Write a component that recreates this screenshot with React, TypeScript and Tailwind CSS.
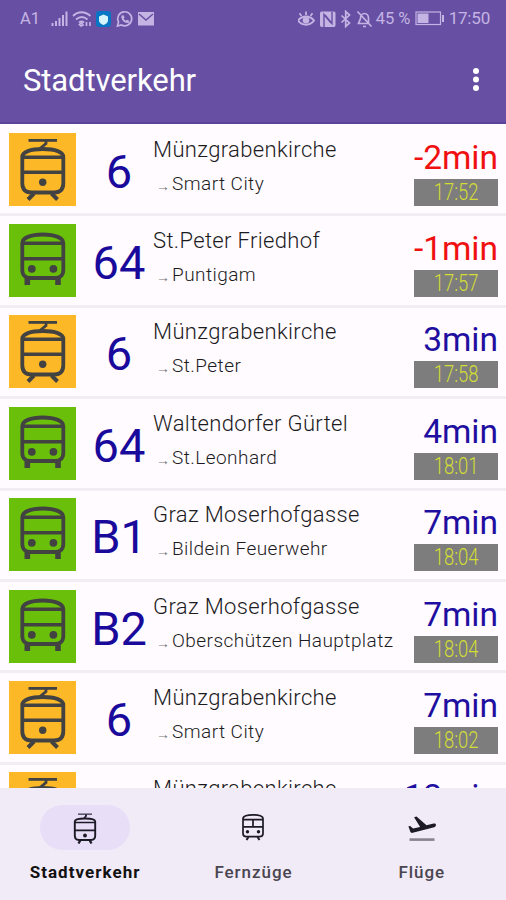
import React from 'react';

type Kind = 'tram' | 'bus';

interface Departure {
  kind: Kind;
  line: string;
  stop: string;
  destination: string;
  wait: string;
  time: string;
  late?: boolean;
}

const departures: Departure[] = [
  { kind: 'tram', line: '6', stop: 'Münzgrabenkirche', destination: 'Smart City', wait: '-2min', time: '17:52', late: true },
  { kind: 'bus', line: '64', stop: 'St.Peter Friedhof', destination: 'Puntigam', wait: '-1min', time: '17:57', late: true },
  { kind: 'tram', line: '6', stop: 'Münzgrabenkirche', destination: 'St.Peter', wait: '3min', time: '17:58' },
  { kind: 'bus', line: '64', stop: 'Waltendorfer Gürtel', destination: 'St.Leonhard', wait: '4min', time: '18:01' },
  { kind: 'bus', line: 'B1', stop: 'Graz Moserhofgasse', destination: 'Bildein Feuerwehr', wait: '7min', time: '18:04' },
  { kind: 'bus', line: 'B2', stop: 'Graz Moserhofgasse', destination: 'Oberschützen Hauptplatz', wait: '7min', time: '18:04' },
  { kind: 'tram', line: '6', stop: 'Münzgrabenkirche', destination: 'Smart City', wait: '7min', time: '18:02' },
  { kind: 'tram', line: '', stop: 'Münzgrabenkirche', destination: '', wait: '12min', time: '' },
];

const TramIcon: React.FC<{ className?: string }> = ({ className }) => (
  <svg viewBox="0 0 67 73" className={className} fill="none" stroke="currentColor" strokeWidth="3.8">
    <path d="M19.5 7.4H48" strokeWidth="2.8" />
    <path d="M37 8v2.5L31 15.5" strokeWidth="2.8" />
    <path d="M13.3 24c0-5 8-8 20.5-8s20.5 3 20.5 8v26c0 6.5-3.5 9.5-9 9.5H22.3c-5.5 0-9-3-9-9.5z" />
    <path d="M13.3 24.3h41M13.3 39.3h41" strokeWidth="3.4" />
    <circle cx="33.7" cy="49.2" r="3.7" fill="currentColor" stroke="none" />
    <path d="M25 60.5l-6 6M42.5 60.5l6 6" strokeWidth="4" />
  </svg>
);

const BusIcon: React.FC<{ className?: string }> = ({ className }) => (
  <svg viewBox="0 0 67 73" className={className} fill="none" stroke="currentColor" strokeWidth="3.8">
    <path d="M13.3 19c0-5 8-8.5 20.5-8.5s20.5 3.5 20.5 8.5v27c0 5.5-3.5 8-8 8H21.3c-4.5 0-8-2.5-8-8z" />
    <path d="M13.3 19.2h41M13.3 34.8h41" strokeWidth="3.4" />
    <circle cx="22.8" cy="44.8" r="3.9" fill="currentColor" stroke="none" />
    <circle cx="44.4" cy="44.8" r="3.9" fill="currentColor" stroke="none" />
    <path d="M18.3 53v8M49 53v8" strokeWidth="5.6" />
  </svg>
);

const NavTramIcon = () => (
  <svg viewBox="0 0 26 34" className="h-[34px] w-[26px]" fill="none" stroke="currentColor" strokeWidth="1.9">
    <path d="M6 3.2h14" stroke="#5d5868" strokeWidth="1.6" />
    <path d="M14 3.5v1.5l-2 2.5" strokeWidth="1.8" />
    <path d="M2.8 10.5c0-2 4-3 10.2-3s10.2 1 10.2 3v14c0 3-1.500 4.500-4.200 4.500H7c-2.700 0-4.200-1.500-4.200-4.500z" />
    <path d="M2.8 11.5h20.4M2.8 19.300h20.4" strokeWidth="1.7" />
    <circle cx="13" cy="24.500" r="1.9" fill="currentColor" stroke="none" />
    <path d="M8.5 29l-2 3.500M17.500 29l2 3.500" strokeWidth="2.3" />
  </svg>
);

const TrainIcon = () => (
  <svg viewBox="0 0 26 30" className="h-[30px] w-[26px]" fill="none" stroke="currentColor" strokeWidth="1.7">
    <path d="M3 5.5c0-2.5 4-3.7 10-3.7s10 1.200 10 3.700v15c0 2-1.300 3.200-3.300 3.200H6.300c-2 0-3.300-1.200-3.300-3.200zM3 6.700h20M3 13.800h20M13 6.700v7" />
    <circle cx="7.5" cy="18.8" r="1.7" fill="currentColor" stroke="none" />
    <circle cx="18.5" cy="18.8" r="1.7" fill="currentColor" stroke="none" />
    <path d="M8.5 24l-2 3M17.5 24l2 3" strokeWidth="2" />
  </svg>
);

const FlightIcon = () => (
  <svg viewBox="0 0 30 30" className="h-[30px] w-[30px]">
    <path d="M2.500 25.300h25v2.600h-25z" fill="#86828e" />
    <path
      d="M28.900 11.600c-.2-.9-1.100-1.200-2.200-1l-7.200 1.600L9.500 3.600l-2.400.7 6 9.600-7 1.500-3-2.500-1.700.4 2 5.800 1.300.9 22.500-5.700c1.200-.3 1.900-1.500 1.700-2.700z"
      fill="currentColor"
    />
  </svg>
);

const StatusBar = () => (
  <div className="flex h-[37px] items-center pl-5 pr-4 text-[17px] text-[#c4b4e3]">
    <span className="w-[31px] pt-px text-[16.5px]">A1</span>
    <svg viewBox="0 0 104 18" className="h-[18px] w-[104px]" fill="none" stroke="currentColor">
      <path d="M1.500 13v3M5 11v5M8.500 8v8M12 5v11M15.500 1.500V16" strokeWidth="2" />
      <path d="M22 6c5-5 12-5 17.500 0M25 9.500c3.500-3 8-3 11.500 0M28 12.700c1.700-1.500 3.500-1.500 5 0" strokeWidth="1.8" />
      <path d="M30.500 13l1.500 2-2 1-1.500-1.500zM35.500 12v4M39 12v4" strokeWidth="1.7" />
      <rect x="45" y="1" width="15" height="16" rx="3" fill="#0876c4" stroke="none" />
      <path d="M52.500 4.500l4.500 2v4c0 2-2 3.500-4.500 4.500-2.500-1-4.500-2.500-4.500-4.500v-4z" fill="#d6f4fb" stroke="none" />
      <path d="M66.500 16l1-4a7 7 0 1 1 3 3z" strokeWidth="1.7" />
      <path d="M70.500 5.500c-1 4 3 8 7 7.500l1-2-2.500-1.200-1.200 1c-1-.5-1.800-1.300-2.200-2.300l1-1-1-2.200z" fill="currentColor" stroke="none" />
      <rect x="87" y="2" width="16" height="13.5" fill="currentColor" stroke="none" />
      <path d="M88 4l7 6 7-6" stroke="#6750a4" strokeWidth="1.5" />
    </svg>
    <div className="ml-auto flex items-center">
      <svg viewBox="0 0 76 18" className="h-[18px] w-[76px]" fill="none" stroke="currentColor">
        <path d="M0 10.500c4-5.500 12-5.500 16 0-4 5.500-12 5.500-16 0z" strokeWidth="2" />
        <circle cx="8" cy="10.3" r="3.3" fill="currentColor" stroke="none" />
        <path d="M8 5V1.500M3.500 6l-2-2.700M12.500 6l2-2.700" strokeWidth="1.7" />
        <path d="M24 1.500h11.500c1.500 0 2 .7 2 2V15c0 1.500-1 2-2 2H24c-1.500 0-2-1-2-2V3.500c0-1.300.7-2 2-2z" fill="currentColor" stroke="none" />
        <path d="M26 17V4.500l7 8.500M34 1.500v12L27 5" stroke="#6750a4" strokeWidth="1.4" />
        <path d="M43.500 5.500l8 7.500-3.800 3.500v-15L51.500 5l-8 7.500" strokeWidth="1.7" />
        <path d="M60.500 13.500h10v-5c0-3-1.800-5-4-5s-4 2-4 5zM65 16.500h3M59.500 1.500l14 15" strokeWidth="1.7" />
      </svg>
      <span className="ml-0.5 w-[39px] whitespace-nowrap pt-px text-[16.5px]">45 %</span>
      <svg viewBox="0 0 30 15" className="h-[15px] w-[30px]" fill="none" stroke="currentColor">
        <rect x="1" y="1" width="24.5" height="12.5" strokeWidth="1.2" />
        <rect x="2.5" y="2.5" width="11" height="9.5" fill="currentColor" stroke="none" />
        <path d="M28 4v7" strokeWidth="2" />
      </svg>
      <span className="ml-1 tracking-[-0.2px]">17:50</span>
    </div>
  </div>
);

const DepartureRow: React.FC<{ item: Departure }> = ({ item }) => (
  <div className="flex h-[91.38px] shrink-0 border-b-[3px] border-[#f1edf2] pl-[9px] pr-2 pt-[7.7px]">
    <div className={`h-[73px] w-[67px] shrink-0 text-[#424242] ${item.kind === 'tram' ? 'bg-[#fdb827]' : 'bg-[#6abf0b]'}`}>
      {item.kind === 'tram' ? <TramIcon className="h-full w-full" /> : <BusIcon className="h-full w-full" />}
    </div>
    <div className="flex w-[77px] shrink-0 justify-center pl-[9px] pt-[12px] text-[47px] leading-[54px] text-[#1a0a9c]">
      {item.line}
    </div>
    <div className="min-w-0 flex-1 whitespace-nowrap">
      <div className="pt-px text-[22px] font-light leading-[32px] tracking-[0.35px] text-[#1c1b1f]">{item.stop}</div>
      {item.destination && (
        <div className="flex items-center pl-[3px] pt-px text-[19px] font-light leading-[30px] text-[#1c1b1f]">
          <span className="w-[16px] pt-1 font-['Liberation_Sans',sans-serif] text-[14px] text-[#777]">→</span>
          <span className="tracking-[0.45px]">{item.destination}</span>
        </div>
      )}
    </div>
    <div className="flex w-[85px] shrink-0 flex-col items-end">
      <div className={`h-[46px] whitespace-nowrap text-[33.5px] leading-[49px] ${item.late ? 'text-[#f01010]' : 'text-[#1f0fa0]'}`}>
        {item.wait}
      </div>
      {item.time && (
        <div className="flex h-[27px] w-[84px] items-center justify-center bg-[#7d7d7d] text-[24px] font-light leading-[27px] text-[#d3de35]">
          <span className="scale-x-[0.77]">{item.time}</span>
        </div>
      )}
    </div>
  </div>
);

interface TabProps {
  label: string;
  active?: boolean;
  children: React.ReactNode;
}

const Tab: React.FC<TabProps> = ({ label, active, children }) => (
  <button className="flex flex-1 flex-col items-center pt-[17px] text-[#1c1a24]">
    <span className={`flex h-[45px] w-[90px] items-center justify-center rounded-full ${active ? 'bg-[#e8def8]' : ''}`}>
      {children}
    </span>
    <span className={`mt-[10px] text-[17px] leading-[24px] ${active ? 'font-bold tracking-[1.05px] text-[#111]' : 'font-medium tracking-[0.95px] text-[#49454f]'}`}>
      {label}
    </span>
  </button>
);

export default function App() {
  return (
    <div className="flex h-[900px] w-[506px] flex-col overflow-hidden bg-[#fffbfe] font-['Roboto',sans-serif]">
      <header className="h-[124px] shrink-0 border-b-2 border-[#5c4299] bg-[#6750a4]">
        <StatusBar />
        <div className="flex h-[87px] items-center justify-between pl-[23px] pr-[26px] text-white">
          <h1 className="pt-0.5 text-[31px] tracking-[-0.1px]">Stadtverkehr</h1>
          <svg viewBox="0 0 8 26" className="h-[26px] w-[8px]" fill="currentColor">
            <circle cx="4" cy="3" r="3" />
            <circle cx="4" cy="11.5" r="3" />
            <circle cx="4" cy="20" r="3" />
          </svg>
        </div>
      </header>

      <main className="flex min-h-0 flex-1 flex-col overflow-hidden pt-px">
        {departures.map((item, i) => (
          <DepartureRow key={i} item={item} />
        ))}
      </main>

      <nav className="flex h-[112px] shrink-0 bg-[#f1eaf7] pl-px">
        <Tab label="Stadtverkehr" active>
          <NavTramIcon />
        </Tab>
        <Tab label="Fernzüge">
          <TrainIcon />
        </Tab>
        <Tab label="Flüge">
          <FlightIcon />
        </Tab>
      </nav>
    </div>
  );
}
